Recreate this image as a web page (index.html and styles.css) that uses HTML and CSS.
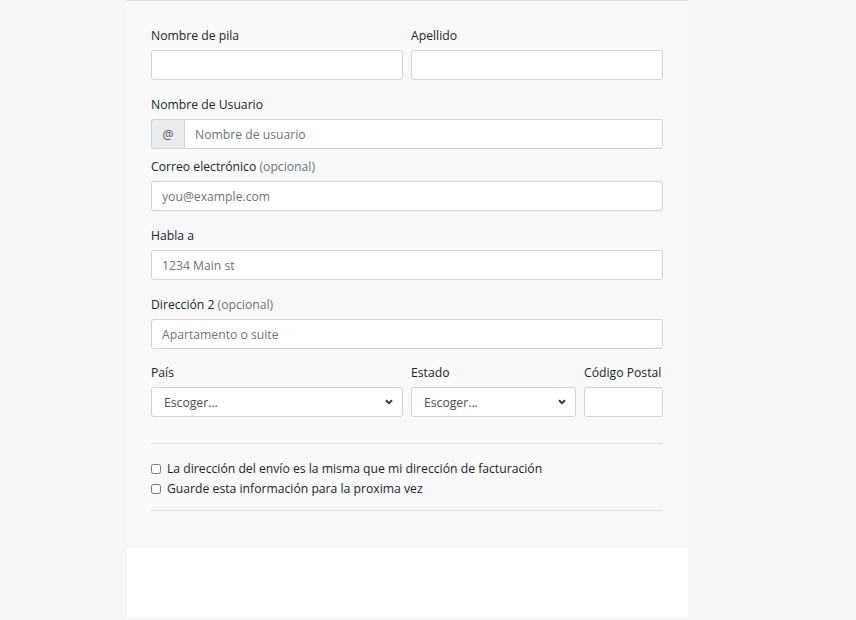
FILE: index.html
```html
<!DOCTYPE html>
<html lang="es">
<head>
<meta charset="utf-8">
<link rel="stylesheet" href="styles.css">
</head>
<body>
<div class="panel">
  <form class="form">
    <div class="row">
      <div class="field col-half">
        <label class="lbl">Nombre de pila</label>
        <input class="ctl" type="text">
      </div>
      <div class="field col-half">
        <label class="lbl">Apellido</label>
        <input class="ctl" type="text">
      </div>
    </div>

    <div class="field gap-user">
      <label class="lbl">Nombre de Usuario</label>
      <div class="group">
        <span class="addon">@</span>
        <input class="ctl grp-ctl" type="text" placeholder="Nombre de usuario">
      </div>
    </div>

    <div class="field gap-small">
      <label class="lbl">Correo electrónico <span class="muted">(opcional)</span></label>
      <input class="ctl" type="email" placeholder="you@example.com">
    </div>

    <div class="field gap">
      <label class="lbl">Habla a</label>
      <input class="ctl" type="text" placeholder="1234 Main st">
    </div>

    <div class="field gap">
      <label class="lbl">Dirección 2 <span class="muted">(opcional)</span></label>
      <input class="ctl" type="text" placeholder="Apartamento o suite">
    </div>

    <div class="row gap-last">
      <div class="field col-country">
        <label class="lbl">País</label>
        <select class="ctl sel"><option>Escoger...</option></select>
      </div>
      <div class="field col-state">
        <label class="lbl">Estado</label>
        <select class="ctl sel"><option>Escoger...</option></select>
      </div>
      <div class="field col-zip">
        <label class="lbl">Código Postal</label>
        <input class="ctl" type="text">
      </div>
    </div>

    <hr class="sep sep-1">

    <label class="check"><input type="checkbox" class="box"><span>La dirección del envío es la misma que mi dirección de facturación</span></label>
    <label class="check"><input type="checkbox" class="box"><span>Guarde esta información para la proxima vez</span></label>

    <hr class="sep sep-2">
  </form>
</div>
<div class="foot"></div>
</body>
</html>
```

FILE: styles.css
```css
html, body {
  margin: 0;
  padding: 0;
}
body {
  background: #f6f8f5;
  font-family: "Open Sans", "Noto Sans", sans-serif;
  font-size: 12.2px;
  color: #212529;
  width: 856px;
  height: 620px;
  overflow: hidden;
}
.panel {
  margin-left: 127px;
  width: 561px;
  box-sizing: border-box;
  background: #f8f9fa;
  border-top: 1px solid #dee2e6;
  padding: 25px 25px 38px 24px;
  height: 548px;
}
.foot {
  margin-left: 127px;
  width: 561px;
  height: 70px;
  background: #ffffff;
}
.form {
  display: flex;
  flex-direction: column;
}
.row {
  display: flex;
  gap: 8px;
}
.col-half { flex: 1 1 0; }
.col-country { width: 252px; }
.col-state { width: 165px; }
.col-zip { width: 79px; }
.field {
  display: flex;
  flex-direction: column;
}
.gap-user { margin-top: 15px; }
.gap-small { margin-top: 8px; }
.gap { margin-top: 15px; }
.gap-last { margin-top: 14px; }
.lbl {
  line-height: 19px;
  margin-bottom: 5px;
  white-space: nowrap;
}
.muted { color: #6c757d; }
.ctl {
  height: 30px;
  box-sizing: border-box;
  border: 1px solid #ced4da;
  border-radius: 3px;
  background: #ffffff;
  font-family: inherit;
  font-size: 12.2px;
  color: #495057;
  padding: 0 10px;
  margin: 0;
  width: 100%;
  outline: none;
}
.ctl::placeholder { color: #6c757d; opacity: 1; }
.group {
  display: flex;
  height: 30px;
}
.addon {
  width: 33px;
  box-sizing: border-box;
  flex: none;
  display: flex;
  align-items: center;
  justify-content: center;
  background: #e9ecef;
  border: 1px solid #ced4da;
  border-right: none;
  border-radius: 3px 0 0 3px;
  color: #495057;
}
.grp-ctl {
  border-radius: 0 3px 3px 0;
  flex: 1 1 auto;
}
.sel {
  -webkit-appearance: none;
  appearance: none;
  padding-left: 12px;
  background: #ffffff url("data:image/svg+xml,%3Csvg xmlns='http://www.w3.org/2000/svg' width='8' height='6' viewBox='0 0 8 6'%3E%3Cpath d='M1 1.2l3 3 3-3' fill='none' stroke='%23343a40' stroke-width='2'/%3E%3C/svg%3E") no-repeat right 9px center / 8px 6px;
}
.sep {
  border: 0;
  border-top: 1px solid #dfe2e5;
  margin: 0;
}
.sep-1 { margin-top: 26px; margin-bottom: 15px; }
.sep-2 { margin-top: 11px; }
.check {
  display: flex;
  align-items: center;
  line-height: 20px;
  height: 20px;
}
.box {
  width: 10px;
  height: 10px;
  margin: 0 6px 0 0;
}
```
